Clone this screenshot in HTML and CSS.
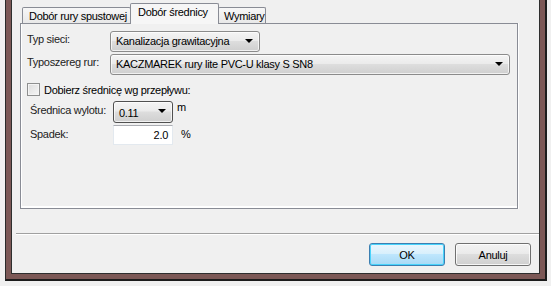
FILE: index.html
```html
<!DOCTYPE html>
<html lang="pl">
<head>
  <meta charset="UTF-8">
  <title>Dobór średnicy</title>
  <link rel="stylesheet" href="styles.css">
</head>
<body>
  <div class="window">
    <div class="client">
      <div class="tabs">
        <div class="tab tab-first">Dobór rury spustowej</div>
        <div class="tab active">Dobór średnicy</div>
        <div class="tab tab-last">Wymiary</div>
      </div>
      <div class="panel">
        <div class="row">
          <span class="label">Typ sieci:</span>
          <div class="combo combo-type">Kanalizacja grawitacyjna<i class="arrow"></i></div>
        </div>
        <div class="row row-series">
          <span class="label">Typoszereg rur:</span>
          <div class="combo combo-series">KACZMAREK rury lite PVC-U klasy S SN8<i class="arrow"></i></div>
        </div>
        <div class="row row-check">
          <span class="checkbox"></span>
          <span>Dobierz średnicę wg przepływu:</span>
        </div>
        <div class="row row-sub">
          <span class="label sub-label">Średnica wylotu:</span>
          <div class="combo combo-small focused">0.11<i class="arrow"></i></div>
          <span class="unit">m</span>
        </div>
        <div class="row row-sub row-slope">
          <span class="label sub-label">Spadek:</span>
          <div class="textbox">2.0</div>
          <span class="unit unit-pct">%</span>
        </div>
      </div>
      <div class="separator"></div>
      <div class="buttons">
        <button class="btn default">OK</button>
        <button class="btn">Anuluj</button>
      </div>
    </div>
  </div>
</body>
</html>
```

FILE: styles.css
```css
body {
  margin: 0;
  padding: 0;
  background-color: #f0f0f0;
  font-family: "Liberation Sans", Arial, sans-serif;
  font-size: 11px;
  letter-spacing: -0.3px;
  color: #000;
}

.window {
  width: 542px;
  height: 281px;
  box-sizing: border-box;
  margin-left: 5px;
  padding: 0 5px 5px 5px;
  background-color: #7c5856;
  border-left: 1px solid #2a2a2a;
  border-right: 2px solid #1c1c1c;
  border-bottom: 2px solid #1c1c1c;
}

.client {
  height: 274px;
  box-sizing: border-box;
  padding: 3px 8px 0 8px;
  background-color: #f0f0f0;
  border: 1px solid #2e2e2e;
  border-top: none;
}

.tabs {
  display: flex;
  align-items: flex-end;
  height: 20px;
  margin-left: 2px;
}

.tab {
  box-sizing: border-box;
  height: 16px;
  padding: 2px 0 0 6px;
  border: 1px solid #898c95;
  border-bottom: none;
  border-radius: 2px 2px 0 0;
  background: linear-gradient(#f7f7f7, #e8e8e8);
  white-space: nowrap;
}

.tab-first {
  width: 109px;
}

.tab.active {
  position: relative;
  z-index: 1;
  width: 89px;
  height: 21px;
  margin: 0 0 -1px -1px;
  padding: 2px 0 0 7px;
  background: #f6f6f6;
}

.tab-last {
  width: 48px;
  margin-left: -1px;
  padding-left: 5px;
}

.panel {
  box-sizing: border-box;
  width: 498px;
  height: 186px;
  padding: 7px 0 0 6px;
  border: 1px solid #898c95;
  background-color: #f0f0f0;
  box-shadow: inset 1px 0 #fff, inset 0 -2px #fff, 1px 0 #fff;
}

.row {
  display: flex;
  align-items: center;
}

.label {
  width: 83px;
  align-self: flex-start;
  padding-top: 2px;
  color: #222;
}

.row-series {
  margin-top: 2px;
}

.combo {
  position: relative;
  box-sizing: border-box;
  height: 21px;
  padding: 3px 0 0 5px;
  border: 1px solid #8b8b8b;
  border-radius: 3px;
  background: linear-gradient(#f4f4f4 0%, #ebebeb 45%, #dddddd 50%, #cfcfcf 100%);
  box-shadow: inset 0 0 0 1px rgba(255, 255, 255, 0.7);
  white-space: nowrap;
}

.combo-type {
  width: 150px;
}

.combo-series {
  width: 400px;
}

.arrow {
  position: absolute;
  right: 6px;
  top: 7px;
  width: 0;
  height: 0;
  border-left: 4px solid transparent;
  border-right: 4px solid transparent;
  border-top: 4px solid #000;
}

.row-check {
  margin-top: 8px;
}

.checkbox {
  box-sizing: border-box;
  width: 13px;
  height: 13px;
  margin-right: 4px;
  border: 1px solid #8e8f8f;
  background: linear-gradient(135deg, #dcdcdc, #f6f6f6);
  box-shadow: inset 0 0 0 1px #f4f4f4;
}

.row-sub {
  margin-top: 5px;
  padding-left: 3px;
}

.sub-label {
  padding-top: 3px;
}

.combo-small {
  width: 60px;
  height: 22px;
  padding-top: 5px;
}

.focused {
  border-color: #505050;
}

.unit {
  align-self: flex-start;
  margin-left: 4px;
}

.row-slope {
  margin-top: 2px;
}

.textbox {
  box-sizing: border-box;
  width: 60px;
  height: 20px;
  padding: 3px 4px 0 0;
  text-align: right;
  background-color: #fff;
  border: 1px solid #e3e9ef;
  border-top-color: #abadb3;
}

.unit-pct {
  margin-left: 8px;
  padding-top: 3px;
}

.separator {
  margin: 24px -8px 0 -4px;
  border-top: 1px solid #a0a0a0;
  border-bottom: 1px solid #fff;
}

.buttons {
  display: flex;
  justify-content: flex-end;
  gap: 10px;
  margin-top: 8px;
}

.btn {
  box-sizing: border-box;
  width: 76px;
  height: 23px;
  padding: 0;
  font-family: inherit;
  font-size: 11px;
  letter-spacing: inherit;
  color: #000;
  border: 1px solid #707070;
  border-radius: 3px;
  background: linear-gradient(#f2f2f2 0%, #ebebeb 45%, #dddddd 50%, #cfcfcf 100%);
  box-shadow: inset 0 0 0 1px rgba(255, 255, 255, 0.8);
}

.btn.default {
  border-color: #3c7fb1;
  background: linear-gradient(#eaf6fd 0%, #d9f0fc 45%, #bee6fd 50%, #a7d9f5 100%);
  box-shadow: inset 0 0 0 1px #48d3fb;
}
```
